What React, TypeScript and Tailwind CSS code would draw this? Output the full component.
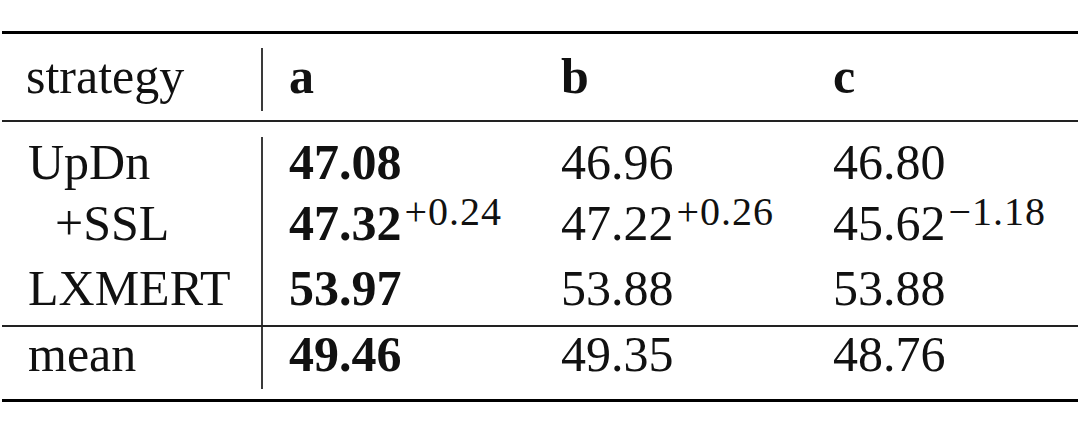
const serif = { fontFamily: '"Liberation Serif", "Times New Roman", serif' };

type Cell = { v: string; sup?: string; bold?: boolean };

interface RowData {
  label: string;
  indent?: boolean;
  cells: Cell[];
}

const body: RowData[] = [
  {
    label: "UpDn",
    cells: [{ v: "47.08", bold: true }, { v: "46.96" }, { v: "46.80" }],
  },
  {
    label: "+SSL",
    indent: true,
    cells: [
      { v: "47.32", bold: true, sup: "+0.24" },
      { v: "47.22", sup: "+0.26" },
      { v: "45.62", sup: "\u22121.18" },
    ],
  },
  {
    label: "LXMERT",
    cells: [{ v: "53.97", bold: true }, { v: "53.88" }, { v: "53.88" }],
  },
];

const mean: RowData = {
  label: "mean",
  cells: [{ v: "49.46", bold: true }, { v: "49.35" }, { v: "48.76" }],
};

function Value({ cell }: { cell: Cell }) {
  return (
    <span className="whitespace-nowrap">
      <span className={cell.bold ? "font-bold" : "font-normal"}>{cell.v}</span>
      {cell.sup && (
        <span className="relative -top-[15px] ml-[3px] text-[40px] leading-none tracking-[1px]">
          {cell.sup}
        </span>
      )}
    </span>
  );
}

function Row({ row, height, padTop = 0 }: { row: RowData; height: string; padTop?: number }) {
  return (
    <div className={`flex ${height} leading-[51px]`}>
      <div
        className={`w-[263px] shrink-0 border-r-2 border-[#3a3a3a] ${row.indent ? "pl-[55px]" : "pl-[28px]"}`}
        style={{ paddingTop: padTop }}
      >
        {row.label}
      </div>
      <div className="w-[298px] shrink-0 pl-[26px]" style={{ paddingTop: padTop }}>
        <Value cell={row.cells[0]} />
      </div>
      <div className="w-[272px] shrink-0" style={{ paddingTop: padTop }}>
        <Value cell={row.cells[1]} />
      </div>
      <div className="flex-1" style={{ paddingTop: padTop }}>
        <Value cell={row.cells[2]} />
      </div>
    </div>
  );
}

export default function App() {
  return (
    <div className="h-[436px] w-[1080px] overflow-hidden bg-white text-[50px] text-[#111]" style={serif}>
      <div className="pt-[31px]">
        {/* top rule */}
        <div className="mx-[2px] h-[3px] bg-black" />

        {/* header */}
        <div className="pt-[14px] pb-[9px]">
          <div className="flex h-[63px] leading-[51px]">
            <div className="w-[263px] shrink-0 border-r-2 border-[#3a3a3a] pt-[3px] pl-[26px]">strategy</div>
            <div className="w-[298px] shrink-0 pt-[3px] pl-[26px] font-bold">a</div>
            <div className="w-[272px] shrink-0 pt-[3px] font-bold">b</div>
            <div className="flex-1 pt-[3px] font-bold">c</div>
          </div>
        </div>

        <div className="mx-[2px] h-[2px] bg-[#222]" />

        {/* body */}
        <div className="pt-[15px]">
          <Row row={body[0]} height="h-[61px]" />
          <Row row={body[1]} height="h-[65px]" />
          <Row row={body[2]} height="h-[62px]" />
          <div className="mx-[2px] h-[2px] bg-[#222]" />
          <Row row={mean} height="h-[62px]" padTop={2} />
        </div>

        <div className="mx-[2px] mt-[10px] h-[3px] bg-black" />
      </div>
    </div>
  );
}
